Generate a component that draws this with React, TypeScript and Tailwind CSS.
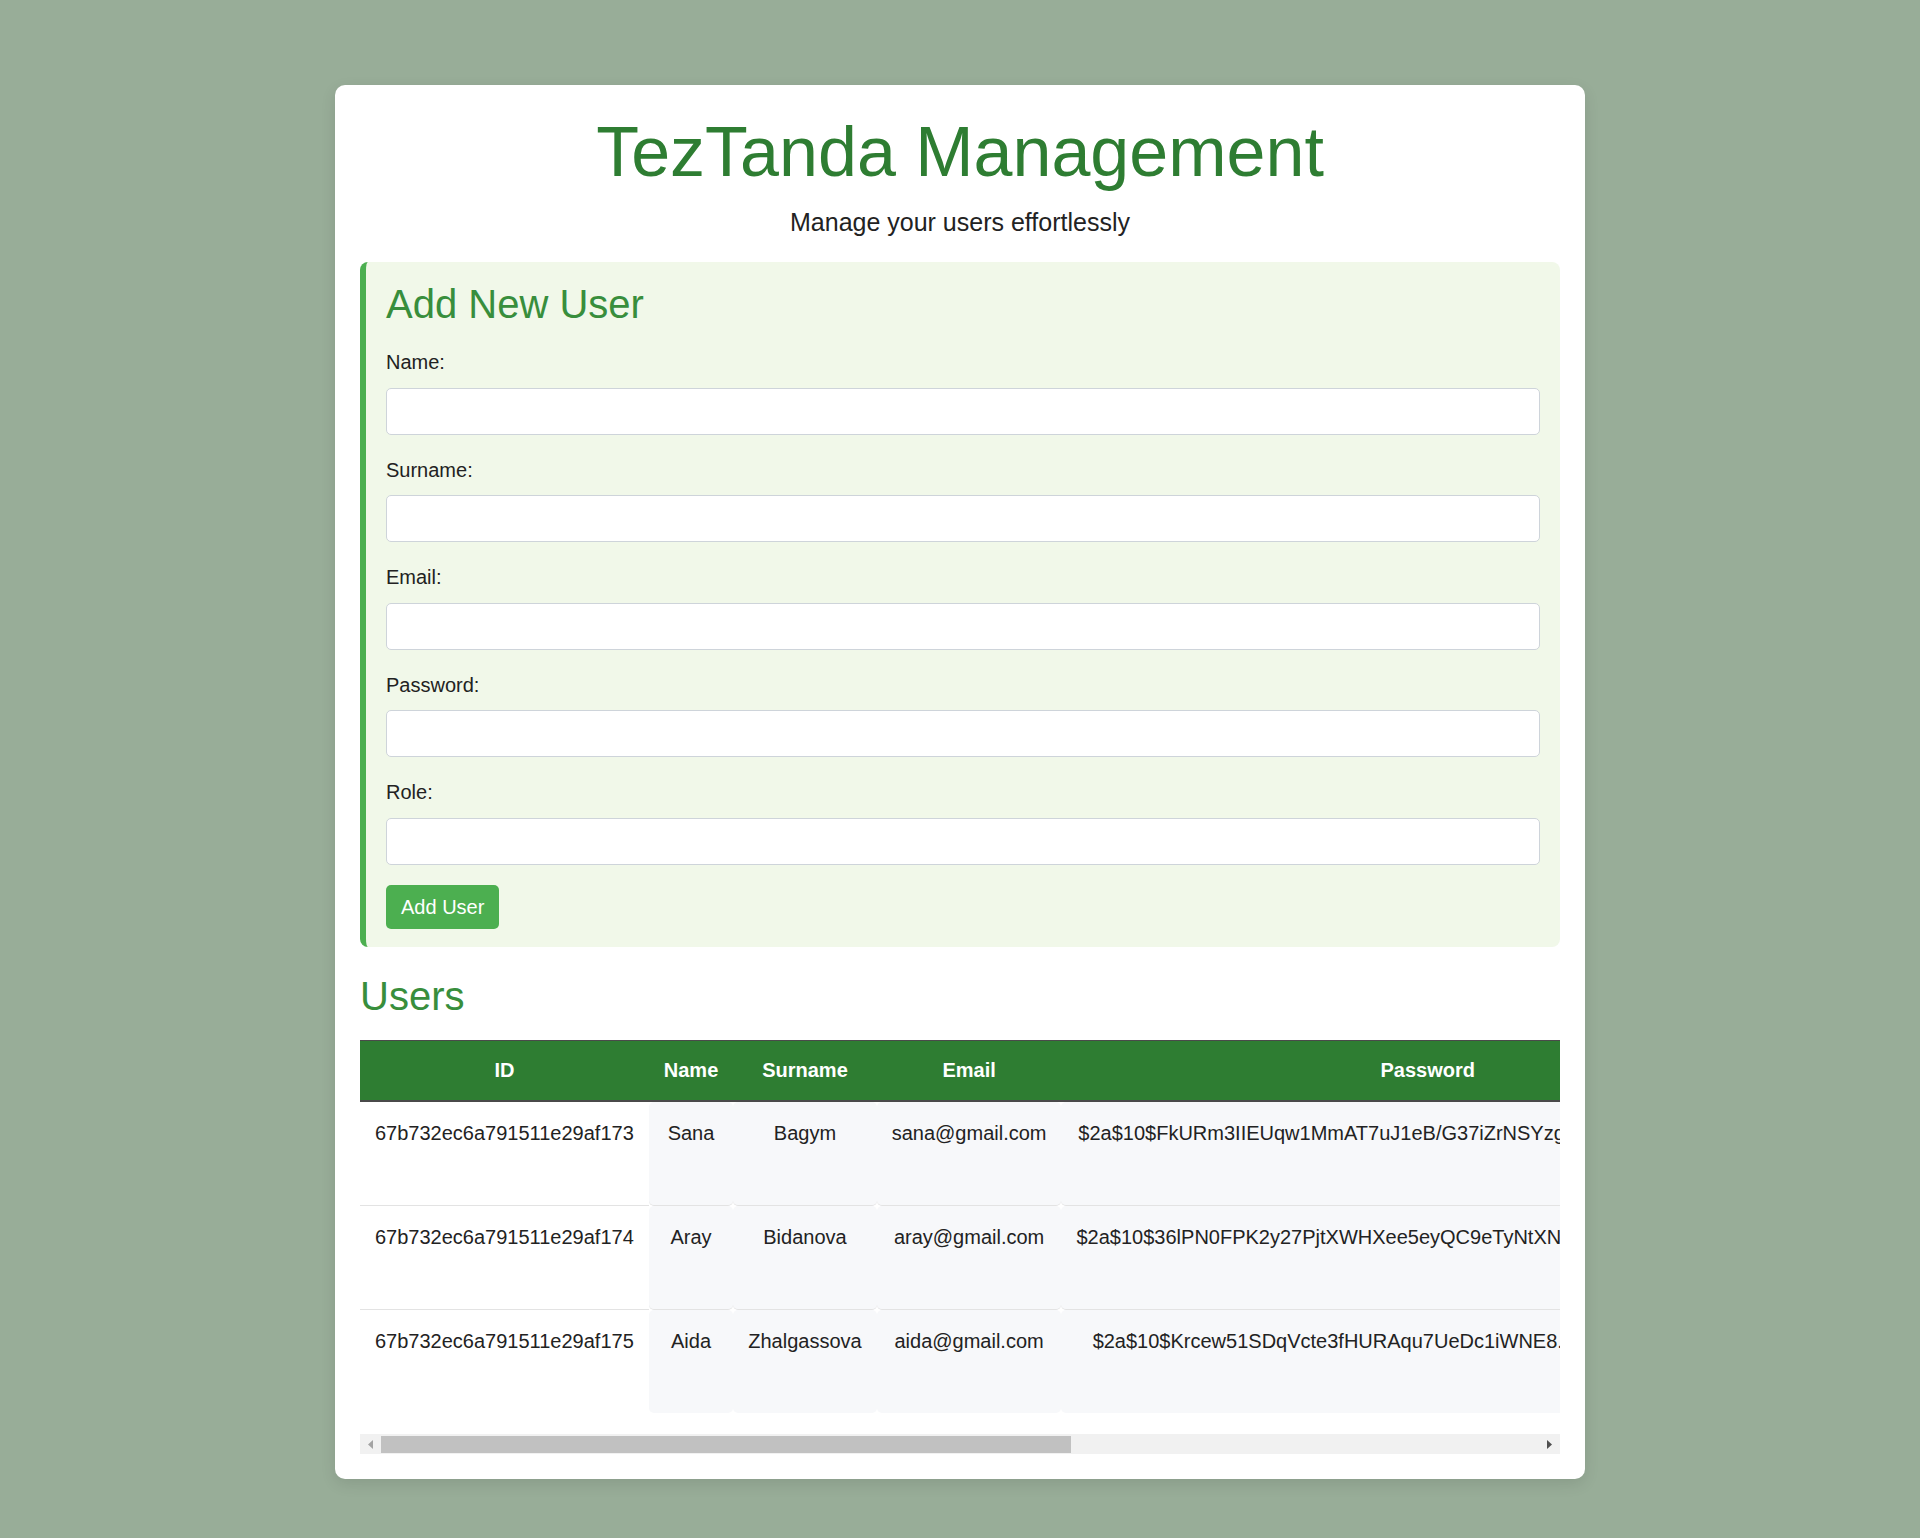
import React from "react";

const users = [
  {
    id: "67b732ec6a791511e29af173",
    name: "Sana",
    surname: "Bagym",
    email: "sana@gmail.com",
    password: "$2a$10$FkURm3IIEUqw1MmAT7uJ1eB/G37iZrNSYzgKdQ2pLxn8vHtE5nRbO",
    role: "user",
  },
  {
    id: "67b732ec6a791511e29af174",
    name: "Aray",
    surname: "Bidanova",
    email: "aray@gmail.com",
    password: "$2a$10$36lPN0FPK2y27PjtXWHXee5eyQC9eTyNtXNmxqHbZ8KcRw2edGxcs",
    role: "user",
  },
  {
    id: "67b732ec6a791511e29af175",
    name: "Aida",
    surname: "Zhalgassova",
    email: "aida@gmail.com",
    password: "$2a$10$Krcew51SDqVcte3fHURAqu7UeDc1iWNE8.KO/fWtj.zxmIi3sMGDe",
    role: "admin",
  },
];

const fields = ["Name:", "Surname:", "Email:", "Password:", "Role:"];

export default function App() {
  return (
    <div className="min-h-screen bg-[#98ad98] pt-[85px] pb-[60px] font-['Liberation_Sans',Arial,sans-serif]">
      <div className="mx-auto w-[1250px] rounded-[10px] bg-white p-[25px] shadow-[0_5px_15px_rgba(0,0,0,0.1)]">
        <h1 className="mt-[1.5px] text-center text-[70px] leading-[80px] text-[#2e7d32]">
          TezTanda Management
        </h1>
        <p className="mt-[16.5px] text-center text-[25px] leading-[29px] text-[#222]">
          Manage your users effortlessly
        </p>

        <div className="mt-[25px] rounded-[8px] border-l-[6px] border-[#4caf50] bg-[#f1f8e9] pt-[19px] pr-[20px] pb-[18px] pl-[20px]">
          <h2 className="text-[40px] leading-[46px] text-[#388e3c]">Add New User</h2>
          <div className="mt-[24px] flex flex-col gap-[24px]">
            {fields.map((f) => (
              <div key={f} className="flex flex-col">
                <label className="block text-[20px] leading-[23px] text-[#222]">{f}</label>
                <input
                  type="text"
                  className="mt-[13.5px] h-[47px] w-full rounded-[5px] border border-[#ced4da] bg-white px-3 text-[20px]"
                />
              </div>
            ))}
          </div>
          <button className="mt-[20.5px] h-[44px] rounded-[5px] bg-[#4caf50] px-[15px] text-[20px] leading-[23px] text-white">
            Add User
          </button>
        </div>

        <h2 className="mt-[26px] text-[40px] leading-[46px] text-[#388e3c]">Users</h2>

        <div className="mt-[21px] overflow-hidden">
          <table className="w-max border-separate border-spacing-0 text-[20px] leading-[23px] text-[#222]">
            <thead>
              <tr>
                {["ID", "Name", "Surname", "Email", "Password", "Role", "Actions"].map((h) => (
                  <th
                    key={h}
                    className="whitespace-nowrap border-t border-b-2 border-[#4a4a4a] bg-[#2e7d32] px-[15px] py-[18px] text-center font-bold text-white"
                  >
                    {h}
                  </th>
                ))}
              </tr>
            </thead>
            <tbody>
              {users.map((u, i) => {
                const last = i === users.length - 1;
                const base =
                  "whitespace-nowrap px-[15px] pt-[20px] pb-[60px] text-center align-top " +
                  (last ? "" : "border-b border-[#e3e3e3] ");
                const gray = base + "rounded-[5px] bg-[#f7f8fa]";
                return (
                  <tr key={u.id}>
                    <td className={base}>{u.id}</td>
                    <td className={gray}>{u.name}</td>
                    <td className={gray}>{u.surname}</td>
                    <td className={gray}>{u.email}</td>
                    <td className={gray}>{u.password}</td>
                    <td className={gray}>{u.role}</td>
                    <td className={gray}>
                      <span className="mr-2 rounded-[5px] bg-[#ffa000] px-3 py-1 text-white">Edit</span>
                      <span className="rounded-[5px] bg-[#e53935] px-3 py-1 text-white">Delete</span>
                    </td>
                  </tr>
                );
              })}
            </tbody>
          </table>
        </div>

        <div className="mt-[21px] flex h-[20px] w-full bg-[#f1f1f1]">
          <div className="flex w-[21px] items-center justify-center">
            <svg width="5" height="9" viewBox="0 0 5 9">
              <polygon points="5,0 5,9 0,4.5" fill="#a3a3a3" />
            </svg>
          </div>
          <div className="flex flex-1 items-start">
            <div className="mt-[2px] h-[17px] w-[690px] bg-[#c1c1c1]" />
          </div>
          <div className="flex w-[21px] items-center justify-center">
            <svg width="5" height="9" viewBox="0 0 5 9">
              <polygon points="0,0 0,9 5,4.5" fill="#505050" />
            </svg>
          </div>
        </div>
      </div>
    </div>
  );
}
